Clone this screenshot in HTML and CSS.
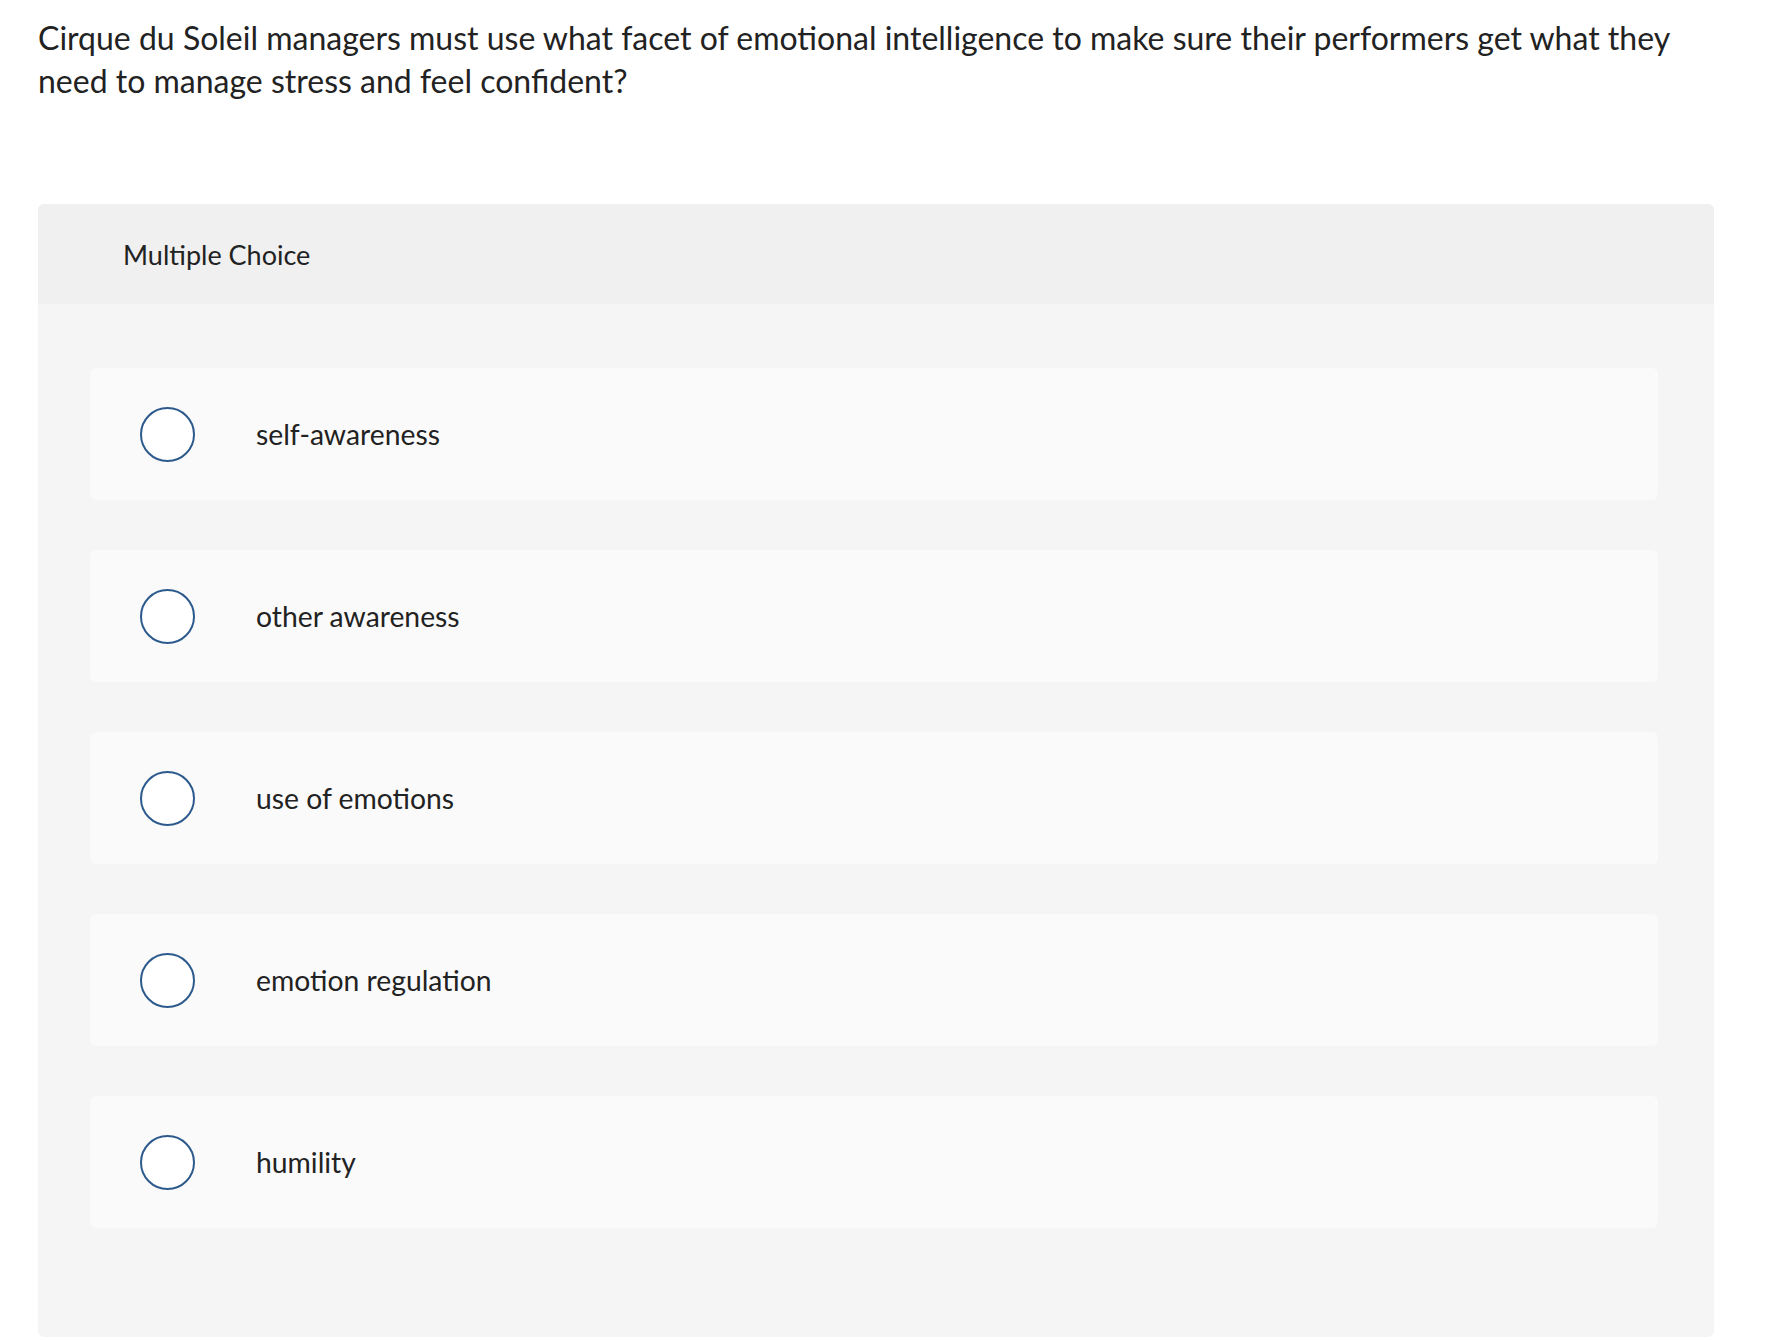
FILE: index.html
```html
<!DOCTYPE html>
<html lang="en">
<head>
<meta charset="utf-8">
<title>Multiple Choice</title>
<link rel="stylesheet" href="styles.css">
</head>
<body>
<main class="page">
  <p class="question">Cirque du Soleil managers must use what facet of emotional intelligence to make sure their performers get what they need to manage stress and feel confident?</p>
  <section class="card">
    <header class="card-header">Multiple Choice</header>
    <div class="options">
      <label class="option"><span class="radio"></span><span class="option-text">self-awareness</span></label>
      <label class="option"><span class="radio"></span><span class="option-text">other awareness</span></label>
      <label class="option"><span class="radio"></span><span class="option-text">use of emotions</span></label>
      <label class="option"><span class="radio"></span><span class="option-text">emotion regulation</span></label>
      <label class="option"><span class="radio"></span><span class="option-text">humility</span></label>
    </div>
  </section>
</main>
</body>
</html>
```
FILE: styles.css
```css
html, body {
  margin: 0;
  padding: 0;
  background: #ffffff;
}
body {
  font-family: "Lato", "Open Sans", sans-serif;
  color: #222222;
}
.page {
  padding: 16px 68px 0 38px;
}
.question {
  margin: 0;
  font-size: 32px;
  line-height: 43px;
  width: 1680px;
}
.card {
  margin-top: 102px;
  width: 1676px;
  background: #f5f5f5;
  border-radius: 6px;
  overflow: hidden;
}
.card-header {
  height: 100px;
  background: #f0f0f0;
  display: flex;
  align-items: center;
  padding-left: 85px;
  font-size: 27px;
}
.options {
  display: flex;
  flex-direction: column;
  gap: 50px;
  padding: 64px 56px 109px 52px;
}
.option {
  height: 132px;
  background: #fafafa;
  border-radius: 6px;
  display: flex;
  align-items: center;
  padding-left: 50px;
}
.radio {
  width: 51px;
  height: 51px;
  border: 2px solid #2d5a8c;
  border-radius: 50%;
  background: #ffffff;
  flex: none;
}
.option-text {
  margin-left: 61px;
  font-size: 28.3px;
}
```
